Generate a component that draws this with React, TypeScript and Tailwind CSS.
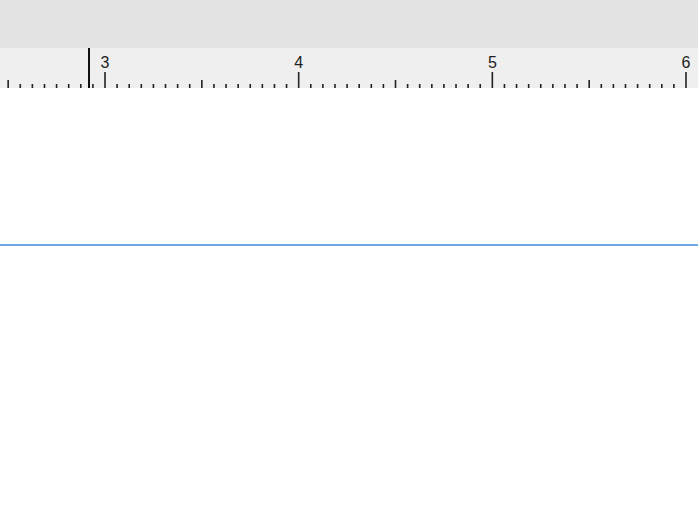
import React from "react";

const UNIT = 193.67;
const ORIGIN = 105; // x of "3"

function Ruler() {
  const ticks: { x: number; h: number }[] = [];
  for (let i = -16; i <= 16 * 4; i++) {
    const x = ORIGIN + (i * UNIT) / 16;
    if (x < 0 || x > 698) continue;
    const h = i % 16 === 0 ? 16 : i % 8 === 0 ? 8 : 4;
    ticks.push({ x, h });
  }
  const labels = [3, 4, 5, 6].map((n) => ({ n, x: ORIGIN + (n - 3) * UNIT }));

  return (
    <svg width="698" height="40" className="block">
      {ticks.map((t, i) => (
        <rect key={i} x={t.x - 0.8} y={40 - t.h} width={1.6} height={t.h} fill="#222" />
      ))}
      {labels.map((l) => (
        <text
          key={l.n}
          x={l.x}
          y={20}
          textAnchor="middle"
          fontSize={16}
          fill="#222"
          style={{ fontFamily: '"Liberation Sans", Arial, sans-serif' }}
        >
          {l.n}
        </text>
      ))}
      {/* cursor */}
      <rect x={88} y={0} width={2} height={40} fill="#111" />
    </svg>
  );
}

export default function App() {
  return (
    <div className="w-[698px] h-[528px] bg-white overflow-hidden flex flex-col font-['Liberation_Sans',Arial,sans-serif]">
      <div className="h-12 bg-[#e3e3e3]" />
      <div className="h-10 bg-[#efefef]">
        <Ruler />
      </div>
      <div className="flex-1 bg-white">
        <div className="mt-[156px] h-[2px] bg-[#6ea7e4]" />
      </div>
    </div>
  );
}
